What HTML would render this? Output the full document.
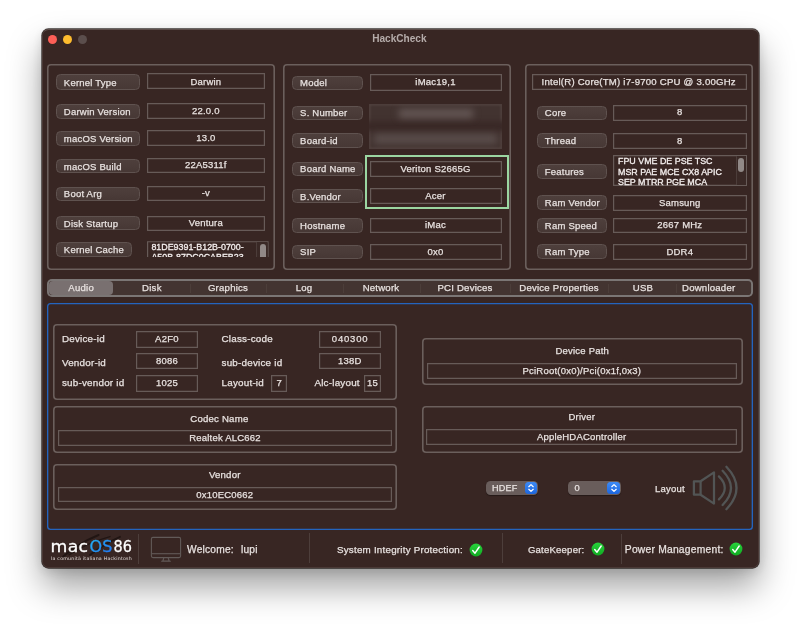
<!DOCTYPE html>
<html><head><meta charset="utf-8"><title>HackCheck</title>
<style>
html,body{margin:0;padding:0;background:#fff;}
body{width:800px;height:624px;position:relative;overflow:hidden;font-family:"Liberation Sans",sans-serif;font-size:9.5px;letter-spacing:0.22px;color:#e8e2e0;-webkit-text-stroke:0.25px #e8e2e0;}
#L{position:absolute;left:0;top:0;width:800px;height:624px;will-change:transform;}
#L>div,#L>svg,.abs,.blue svg,.blur i,.clip span,.clip i{position:absolute;box-sizing:border-box;display:block;}
.win{left:41.5px;top:28.5px;width:717px;height:539.5px;background:#382623;border-radius:6.5px;border:1px solid #4a3936;border-top-color:#5d4e4b;box-shadow:0 0 0 0.7px rgba(18,10,8,.8),0 19px 34px rgba(0,0,0,.37),0 3px 12px rgba(0,0,0,.13);}
.tl{width:9.4px;height:9.4px;border-radius:50%;}
.title{font-weight:bold;letter-spacing:0;color:#b5acaa;-webkit-text-stroke:0;}
.grp{box-shadow:inset 0 0 0 1.6px #6b5f5c;border-radius:4px;}
.lbl{border-radius:4.5px;background:linear-gradient(#4e3f3c,#473835);border:1px solid #5f524f;}
.val{box-shadow:inset 0 0 0 1.2px #675b58;}
.clip{overflow:hidden;}
.ml{font-size:8.9px;line-height:10px;letter-spacing:0;white-space:nowrap;color:#f4efee;-webkit-text-stroke:0.3px #f4efee;}
.trk{border-left:1px solid #4c3d3a;background:#3a2926;}
.thumb{background:#918987;border-radius:3px;}
.t{white-space:nowrap;}
.tabs{box-shadow:inset 0 0 0 1.9px #7b7675;border-radius:5px;background:#433431;}
.sel{background:#797070;border-radius:4px;}
.sep{background:#4d3e3b;}
.sep2{background:#55474480;}
.pop{background:#695d5b;border-radius:4.5px;box-shadow:0 0.5px 1px rgba(0,0,0,.35);}
.blue{background:linear-gradient(#3d8bf6,#1c66df);border-radius:3.5px;}
.blue svg{left:0.15px;top:0}
.blur{background:#423330;filter:blur(0.7px);overflow:hidden}
.blur i{filter:blur(3.5px);}
.blur i.bd{left:0;top:0;right:0;bottom:0;border:1.2px solid #5f514e;filter:blur(0.9px);}
</style></head><body><div id="L">
<div class="win"></div>
<div class="tl" style="left:47.8px;top:34.5px;background:#fe5f57"></div>
<div class="tl" style="left:62.8px;top:34.5px;background:#febc2e"></div>
<div class="tl" style="left:77.8px;top:34.5px;background:#5b4e4c"></div>
<div class="t title" style="left:299.4px;top:33px;height:11px;line-height:11px;font-size:10.1px;width:200.0px;text-align:center;">HackCheck</div>
<div class="grp" style="left:47px;top:64px;width:227.9px;height:205.6px;"></div>
<div class="lbl" style="left:56.0px;top:74.25px;width:84.0px;height:15.25px;"></div>
<div class="t" style="left:63.85px;top:77px;height:11px;line-height:11px;font-size:9.5px;">Kernel Type</div>
<div class="val" style="left:147px;top:73.25px;width:117.75px;height:16.15px;"></div>
<div class="t" style="left:147px;top:76px;height:11px;line-height:11px;font-size:9.5px;width:117.75px;text-align:center;">Darwin</div>
<div class="lbl" style="left:56.0px;top:104px;width:84.0px;height:14.6px;"></div>
<div class="t" style="left:63.85px;top:106px;height:11px;line-height:11px;font-size:9.5px;">Darwin Version</div>
<div class="val" style="left:147px;top:102.6px;width:117.75px;height:16.4px;"></div>
<div class="t" style="left:147px;top:105px;height:11px;line-height:11px;font-size:9.5px;width:117.75px;text-align:center;">22.0.0</div>
<div class="lbl" style="left:56.0px;top:130.8px;width:84.0px;height:14.8px;"></div>
<div class="t" style="left:63.85px;top:133px;height:11px;line-height:11px;font-size:9.5px;">macOS Version</div>
<div class="val" style="left:147px;top:129.5px;width:117.75px;height:16.25px;"></div>
<div class="t" style="left:147px;top:132px;height:11px;line-height:11px;font-size:9.5px;width:117.75px;text-align:center;">13.0</div>
<div class="lbl" style="left:56.0px;top:158.6px;width:84.0px;height:14.6px;"></div>
<div class="t" style="left:63.85px;top:161px;height:11px;line-height:11px;font-size:9.5px;">macOS Build</div>
<div class="val" style="left:147px;top:157.5px;width:117.75px;height:15.5px;"></div>
<div class="t" style="left:147px;top:159px;height:11px;line-height:11px;font-size:9.5px;width:117.75px;text-align:center;">22A5311f</div>
<div class="lbl" style="left:56.0px;top:186.5px;width:84.0px;height:14.5px;"></div>
<div class="t" style="left:63.85px;top:188px;height:11px;line-height:11px;font-size:9.5px;">Boot Arg</div>
<div class="val" style="left:147px;top:185.5px;width:117.75px;height:15.75px;"></div>
<div class="t" style="left:147px;top:187px;height:11px;line-height:11px;font-size:9.5px;width:117.75px;text-align:center;">-v</div>
<div class="lbl" style="left:56.0px;top:216px;width:84.0px;height:14.4px;"></div>
<div class="t" style="left:63.85px;top:218px;height:11px;line-height:11px;font-size:9.5px;">Disk Startup</div>
<div class="val" style="left:147px;top:215.5px;width:117.75px;height:15.25px;"></div>
<div class="t" style="left:147px;top:217px;height:11px;line-height:11px;font-size:9.5px;width:117.75px;text-align:center;">Ventura</div>
<div class="lbl" style="left:56.0px;top:242.25px;width:75.5px;height:14.65px;"></div>
<div class="t" style="left:63.85px;top:244px;height:11px;line-height:11px;font-size:9.5px;">Kernel Cache</div>
<div class="val clip" style="left:147px;top:241.35px;width:121.6px;height:19.75px;clip-path:inset(0 0 4px 0)"><span class="ml" style="left:4.4px;top:0.75px">81DE9391-B12B-0700-</span><span class="ml" style="left:4.4px;top:11.15px">A50B-87DC0CABEB23</span><i class="trk" style="left:109.4px;top:1px;width:11px;height:16px"></i><i class="thumb" style="left:112.5px;top:2.7px;width:6.2px;height:16px"></i></div>
<div class="grp" style="left:283.2px;top:64px;width:227.5px;height:205.6px;"></div>
<div class="lbl" style="left:292.25px;top:75.5px;width:70.25px;height:14.25px;"></div>
<div class="t" style="left:300.1px;top:77px;height:11px;line-height:11px;font-size:9.5px;">Model</div>
<div class="val" style="left:369.5px;top:74px;width:132.0px;height:16.5px;"></div>
<div class="t" style="left:369.5px;top:76px;height:11px;line-height:11px;font-size:9.5px;width:132.0px;text-align:center;">iMac19,1</div>
<div class="lbl" style="left:292.25px;top:105.5px;width:70.25px;height:14.25px;"></div>
<div class="t" style="left:300.1px;top:107px;height:11px;line-height:11px;font-size:9.5px;">S. Number</div>
<div class="lbl" style="left:292.25px;top:133px;width:70.25px;height:14.6px;"></div>
<div class="t" style="left:300.1px;top:135px;height:11px;line-height:11px;font-size:9.5px;">Board-id</div>
<div class="lbl" style="left:292.25px;top:161.5px;width:70.25px;height:14.25px;"></div>
<div class="t" style="left:300.1px;top:163px;height:11px;line-height:11px;font-size:9.5px;">Board Name</div>
<div class="val" style="left:369.5px;top:160.5px;width:132.0px;height:16.0px;"></div>
<div class="t" style="left:369.5px;top:163px;height:11px;line-height:11px;font-size:9.5px;width:132.0px;text-align:center;">Veriton S2665G</div>
<div class="lbl" style="left:292.25px;top:189px;width:70.25px;height:14.25px;"></div>
<div class="t" style="left:300.1px;top:191px;height:11px;line-height:11px;font-size:9.5px;">B.Vendor</div>
<div class="val" style="left:369.5px;top:188px;width:132.0px;height:16px;"></div>
<div class="t" style="left:369.5px;top:190px;height:11px;line-height:11px;font-size:9.5px;width:132.0px;text-align:center;">Acer</div>
<div class="lbl" style="left:292.25px;top:218.25px;width:70.25px;height:14.35px;"></div>
<div class="t" style="left:300.1px;top:220px;height:11px;line-height:11px;font-size:9.5px;">Hostname</div>
<div class="val" style="left:369.5px;top:217.5px;width:132.0px;height:15.5px;"></div>
<div class="t" style="left:369.5px;top:219px;height:11px;line-height:11px;font-size:9.5px;width:132.0px;text-align:center;">iMac</div>
<div class="lbl" style="left:292.25px;top:244.5px;width:70.25px;height:14.5px;"></div>
<div class="t" style="left:300.1px;top:246px;height:11px;line-height:11px;font-size:9.5px;">SIP</div>
<div class="val" style="left:369.5px;top:243.75px;width:132.0px;height:15.75px;"></div>
<div class="t" style="left:369.5px;top:246px;height:11px;line-height:11px;font-size:9.5px;width:132.0px;text-align:center;">0x0</div>
<div class="blur" style="left:369px;top:104px;width:133.4px;height:45px"><i class="bd"></i><i style="left:-4px;top:16.5px;width:142px;height:10px;background:#3a2927;filter:blur(2.5px)"></i><i style="left:30px;top:4.5px;width:74px;height:9.5px;background:#65585600;"></i><i style="left:30px;top:4.5px;width:74px;height:9.5px;background:#635654"></i><i style="left:5px;top:29.5px;width:123px;height:10.5px;background:#594c4a"></i></div>
<div class="" style="left:365px;top:155px;width:144px;height:53.75px;border:2px solid #9bd6a1"></div>
<div class="grp" style="left:525.4px;top:64px;width:227.6px;height:205.8px;"></div>
<div class="val" style="left:531.5px;top:74px;width:215.1px;height:15.75px;"></div>
<div class="t" style="left:531.2px;top:76px;height:11px;line-height:11px;font-size:9.6px;width:215.1px;text-align:center;">Intel(R) Core(TM) i7-9700 CPU @ 3.00GHz</div>
<div class="lbl" style="left:537.0px;top:105.5px;width:69.6px;height:14.6px;"></div>
<div class="t" style="left:544.85px;top:107px;height:11px;line-height:11px;font-size:9.5px;">Core</div>
<div class="val" style="left:613px;top:104.5px;width:133.6px;height:16.0px;"></div>
<div class="t" style="left:613px;top:106px;height:11px;line-height:11px;font-size:9.5px;width:133.6px;text-align:center;">8</div>
<div class="lbl" style="left:537.0px;top:133px;width:69.6px;height:14.6px;"></div>
<div class="t" style="left:544.85px;top:135px;height:11px;line-height:11px;font-size:9.5px;">Thread</div>
<div class="val" style="left:613px;top:133px;width:133.6px;height:16px;"></div>
<div class="t" style="left:613px;top:135px;height:11px;line-height:11px;font-size:9.5px;width:133.6px;text-align:center;">8</div>
<div class="lbl" style="left:537.0px;top:164px;width:69.6px;height:14.75px;"></div>
<div class="t" style="left:544.85px;top:166px;height:11px;line-height:11px;font-size:9.5px;">Features</div>
<div class="lbl" style="left:537.0px;top:195.25px;width:69.6px;height:15.0px;"></div>
<div class="t" style="left:544.85px;top:197px;height:11px;line-height:11px;font-size:9.5px;">Ram Vendor</div>
<div class="val" style="left:613px;top:195px;width:133.6px;height:15.5px;"></div>
<div class="t" style="left:613px;top:197px;height:11px;line-height:11px;font-size:9.5px;width:133.6px;text-align:center;">Samsung</div>
<div class="lbl" style="left:537.0px;top:218.1px;width:69.6px;height:14.8px;"></div>
<div class="t" style="left:544.85px;top:220px;height:11px;line-height:11px;font-size:9.5px;">Ram Speed</div>
<div class="val" style="left:613px;top:217.5px;width:133.6px;height:15.5px;"></div>
<div class="t" style="left:613px;top:219px;height:11px;line-height:11px;font-size:9.5px;width:133.6px;text-align:center;">2667 MHz</div>
<div class="lbl" style="left:537.0px;top:244.4px;width:69.6px;height:14.6px;"></div>
<div class="t" style="left:544.85px;top:246px;height:11px;line-height:11px;font-size:9.5px;">Ram Type</div>
<div class="val" style="left:613px;top:244px;width:133.6px;height:15.5px;"></div>
<div class="t" style="left:613px;top:246px;height:11px;line-height:11px;font-size:9.5px;width:133.6px;text-align:center;">DDR4</div>
<div class="val clip" style="left:613px;top:155.25px;width:133.6px;height:31.15px;"><span class="ml" style="left:5px;top:1px">FPU VME DE PSE TSC</span><span class="ml" style="left:5px;top:11.5px">MSR PAE MCE CX8 APIC</span><span class="ml" style="left:5px;top:21.85px">SEP MTRR PGE MCA</span><i class="trk" style="left:122.6px;top:1px;width:10px;height:29px"></i><i class="thumb" style="left:125.1px;top:3.2px;width:5.8px;height:13.5px"></i></div>
<div class="tabs" style="left:46.9px;top:279px;width:706.1px;height:18.4px;"></div>
<div class="sel" style="left:48.6px;top:280.9px;width:64.5px;height:14.6px;"></div>
<div class="t" style="left:21.2px;top:282px;height:11px;line-height:11px;font-size:9.6px;width:120.0px;text-align:center;">Audio</div>
<div class="t" style="left:91.9px;top:282px;height:11px;line-height:11px;font-size:9.6px;width:120.0px;text-align:center;">Disk</div>
<div class="t" style="left:168px;top:282px;height:11px;line-height:11px;font-size:9.6px;width:120px;text-align:center;">Graphics</div>
<div class="t" style="left:244px;top:282px;height:11px;line-height:11px;font-size:9.6px;width:120px;text-align:center;">Log</div>
<div class="t" style="left:321px;top:282px;height:11px;line-height:11px;font-size:9.6px;width:120px;text-align:center;">Network</div>
<div class="t" style="left:405px;top:282px;height:11px;line-height:11px;font-size:9.6px;width:120px;text-align:center;">PCI Devices</div>
<div class="t" style="left:499px;top:282px;height:11px;line-height:11px;font-size:9.6px;width:120px;text-align:center;">Device Properties</div>
<div class="t" style="left:583px;top:282px;height:11px;line-height:11px;font-size:9.6px;width:120px;text-align:center;">USB</div>
<div class="t" style="left:648.7px;top:282px;height:11px;line-height:11px;font-size:9.6px;width:120.0px;text-align:center;">Downloader</div>
<div class="sep2" style="left:189.5px;top:284px;width:1.0px;height:9px;"></div>
<div class="sep2" style="left:265.75px;top:284px;width:1.0px;height:9px;"></div>
<div class="sep2" style="left:342.75px;top:284px;width:1.0px;height:9px;"></div>
<div class="sep2" style="left:419.5px;top:284px;width:1.0px;height:9px;"></div>
<div class="sep2" style="left:510.0px;top:284px;width:1.0px;height:9px;"></div>
<div class="sep2" style="left:608.25px;top:284px;width:1.0px;height:9px;"></div>
<div class="sep2" style="left:676.0px;top:284px;width:1.0px;height:9px;"></div>
<div class="" style="left:47.1px;top:303px;width:705.9px;height:227.1px;box-shadow:inset 0 0 0 1.35px #2464be;border-radius:3.5px"></div>
<div class="grp" style="left:53px;top:323.5px;width:343.75px;height:76.25px;"></div>
<div class="t" style="left:61.9px;top:333px;height:11px;line-height:11px;font-size:9.85px;">Device-id</div>
<div class="val" style="left:135.9px;top:331.4px;width:62.0px;height:16.35px;"></div>
<div class="t" style="left:135.9px;top:333px;height:11px;line-height:11px;font-size:9.5px;width:62.0px;text-align:center;">A2F0</div>
<div class="t" style="left:61.9px;top:357px;height:11px;line-height:11px;font-size:9.85px;">Vendor-id</div>
<div class="val" style="left:135.9px;top:353.4px;width:62.0px;height:16.1px;"></div>
<div class="t" style="left:135.9px;top:355px;height:11px;line-height:11px;font-size:9.5px;width:62.0px;text-align:center;">8086</div>
<div class="t" style="left:61.9px;top:377px;height:11px;line-height:11px;font-size:9.85px;">sub-vendor id</div>
<div class="val" style="left:135.9px;top:375.4px;width:62.0px;height:16.2px;"></div>
<div class="t" style="left:135.9px;top:377px;height:11px;line-height:11px;font-size:9.5px;width:62.0px;text-align:center;">1025</div>
<div class="t" style="left:221.5px;top:333px;height:11px;line-height:11px;font-size:9.85px;">Class-code</div>
<div class="val" style="left:318.5px;top:331.4px;width:62.4px;height:16.35px;"></div>
<div class="t" style="left:318.5px;top:333px;height:11px;line-height:11px;font-size:9.5px;width:62.4px;text-align:center;"><span style="letter-spacing:0.8px;margin-right:-0.8px">040300</span></div>
<div class="t" style="left:221.5px;top:357px;height:11px;line-height:11px;font-size:9.85px;">sub-device id</div>
<div class="val" style="left:318.5px;top:353.4px;width:62.4px;height:16.1px;"></div>
<div class="t" style="left:318.5px;top:355px;height:11px;line-height:11px;font-size:9.5px;width:62.4px;text-align:center;">138D</div>
<div class="t" style="left:221.5px;top:377px;height:11px;line-height:11px;font-size:9.85px;">Layout-id</div>
<div class="val" style="left:270.9px;top:375.4px;width:16.2px;height:16.2px;"></div>
<div class="t" style="left:271.2px;top:377px;height:11px;line-height:11px;font-size:9.5px;width:16.2px;text-align:center;">7</div>
<div class="t" style="left:314.4px;top:377px;height:11px;line-height:11px;font-size:9.85px;">Alc-layout</div>
<div class="val" style="left:363.75px;top:375.4px;width:17.15px;height:16.2px;"></div>
<div class="t" style="left:364.05px;top:377px;height:11px;line-height:11px;font-size:9.5px;width:17.15px;text-align:center;">15</div>
<div class="grp" style="left:53px;top:406.25px;width:343.75px;height:46.25px;"></div>
<div class="t" style="left:190.25px;top:413px;height:11px;line-height:11px;font-size:9.6px;">Codec Name</div>
<div class="val" style="left:58px;top:429.5px;width:334px;height:16.1px;"></div>
<div class="t" style="left:58px;top:432px;height:11px;line-height:11px;font-size:9.5px;width:334px;text-align:center;">Realtek ALC662</div>
<div class="grp" style="left:53px;top:464.25px;width:343.75px;height:46.0px;"></div>
<div class="t" style="left:53px;top:469px;height:11px;line-height:11px;font-size:9.6px;width:343.5px;text-align:center;">Vendor</div>
<div class="val" style="left:58px;top:486.9px;width:333.5px;height:15.6px;"></div>
<div class="t" style="left:58px;top:489px;height:11px;line-height:11px;font-size:9.5px;width:333.5px;text-align:center;">0x10EC0662</div>
<div class="grp" style="left:421.5px;top:338px;width:321.25px;height:46.5px;"></div>
<div class="t" style="left:421.5px;top:345px;height:11px;line-height:11px;font-size:9.5px;width:321.5px;text-align:center;">Device Path</div>
<div class="val" style="left:426.75px;top:363px;width:310.25px;height:15.75px;"></div>
<div class="t" style="left:426.75px;top:365px;height:11px;line-height:11px;font-size:9.5px;width:310.25px;text-align:center;">PciRoot(0x0)/Pci(0x1f,0x3)</div>
<div class="grp" style="left:421.5px;top:406.25px;width:321.25px;height:46.25px;"></div>
<div class="t" style="left:421.5px;top:411px;height:11px;line-height:11px;font-size:9.5px;width:320.5px;text-align:center;">Driver</div>
<div class="val" style="left:426.25px;top:429.4px;width:310.75px;height:15.2px;"></div>
<div class="t" style="left:426.25px;top:431px;height:11px;line-height:11px;font-size:9.5px;width:310.75px;text-align:center;">AppleHDAController</div>
<div class="pop" style="left:486px;top:480.6px;width:52px;height:14.6px;"></div>
<div class="t" style="left:492px;top:483px;height:10px;line-height:10px;font-size:9.1px;">HDEF</div>
<div class="blue" style="left:525px;top:481.7px;width:12.3px;height:12.0px;"><svg width="12" height="12" viewBox="0 0 12 12"><path d="M3.8 4.7 L6 2.6 L8.2 4.7 M3.8 7.3 L6 9.4 L8.2 7.3" fill="none" stroke="#fff" stroke-width="1.25" stroke-linecap="round" stroke-linejoin="round"/></svg></div>
<div class="pop" style="left:568px;top:480.6px;width:53px;height:14.6px;"></div>
<div class="t" style="left:574.4px;top:483px;height:10px;line-height:10px;font-size:9.3px;">0</div>
<div class="blue" style="left:607.4px;top:481.7px;width:12.3px;height:12.0px;"><svg width="12" height="12" viewBox="0 0 12 12"><path d="M3.8 4.7 L6 2.6 L8.2 4.7 M3.8 7.3 L6 9.4 L8.2 7.3" fill="none" stroke="#fff" stroke-width="1.25" stroke-linecap="round" stroke-linejoin="round"/></svg></div>
<div class="t" style="left:655px;top:483px;height:11px;line-height:11px;font-size:9.5px;">Layout</div>
<svg class="abs" style="left:690px;top:462px" width="52" height="52" viewBox="690 462 52 52" fill="none" stroke="#525555" stroke-width="2.25" stroke-linejoin="round" stroke-linecap="round">
<path d="M693.9 481.3 H700.6 L714 472.4 V503.6 L700.6 494.7 H693.9 Z"/><path d="M700.6 481.5 V494.5"/>
<path d="M718.9 476.4 Q730.6 488 718.9 499.4"/><path d="M722.6 470.8 Q739.4 488 722.6 505"/><path d="M726.4 466.7 Q746.6 488 726.4 509.2"/></svg>
<div class="sep" style="left:137.75px;top:534px;width:1.0px;height:30px;"></div>
<div class="sep" style="left:308.75px;top:532.5px;width:1.0px;height:30.5px;"></div>
<div class="sep" style="left:502.0px;top:533px;width:1.0px;height:30px;"></div>
<div class="sep" style="left:620.75px;top:533.75px;width:1.0px;height:30.0px;"></div>
<svg class="abs" style="left:46px;top:532px" width="92" height="34" viewBox="46 532 92 34">
<g fill="none" stroke="#1c1210" stroke-linecap="round" opacity=".8"><path d="M63.2 556.6 Q78 543.5 98.6 535" stroke-width="2"/><path d="M69 554.8 Q88 542.5 110 536.6" stroke-width="1.5"/><path d="M90 555 Q104 544 120 536.8" stroke-width="1.9"/></g>
<defs><linearGradient id="lg" x1="0" y1="0" x2="1" y2="1"><stop offset="0" stop-color="#25bbfb"/><stop offset="1" stop-color="#1f6cee"/></linearGradient></defs>
<g font-family="DejaVu Sans, Liberation Sans, sans-serif" font-size="15.8" fill="#fff" stroke="#fff" stroke-width=".3"><text x="50.6" y="552" textLength="37.6" lengthAdjust="spacingAndGlyphs">mac</text><text x="89.4" y="552" fill="url(#lg)" stroke="url(#lg)" textLength="23.2" lengthAdjust="spacingAndGlyphs">OS</text><text x="113.4" y="552" textLength="18.8" lengthAdjust="spacingAndGlyphs">86</text></g>
<text x="51" y="559.6" font-family="DejaVu Sans, Liberation Sans, sans-serif" font-size="4.7" fill="#e4dedc" textLength="81" lengthAdjust="spacingAndGlyphs">la comunità italiana Hackintosh</text>
</svg>
<svg class="abs" style="left:149px;top:535px" width="34" height="29" viewBox="0 0 34 29" fill="none" stroke="#625a58" stroke-width="1.1" stroke-linejoin="round">
<rect x="2.4" y="2.4" width="29.2" height="20.2" rx="1.6"/><path d="M2.6 18.7 H31.4"/><path d="M14.8 22.8 L13.8 26 H20.2 L19.2 22.8 M12.2 26.2 H21.8"/></svg>
<div class="t" style="left:187px;top:544px;height:11px;line-height:11px;font-size:10.2px;">Welcome:</div>
<div class="t" style="left:241px;top:544px;height:11px;line-height:11px;font-size:10.2px;">lupi</div>
<div class="t" style="left:337px;top:544px;height:11px;line-height:11px;font-size:9.8px;">System Integrity Protection:</div>
<div class="t" style="left:527.9px;top:544px;height:11px;line-height:11px;font-size:9.55px;">GateKeeper:</div>
<div class="t" style="left:624.8px;top:544px;height:11px;line-height:11px;font-size:10.3px;">Power Management:</div>
<svg class="abs" style="left:469px;top:542.5px" width="14" height="14" viewBox="0 0 14 14"><defs><linearGradient id="g0" x1="0" y1="0" x2="0" y2="1"><stop offset="0" stop-color="#27d23b"/><stop offset="1" stop-color="#10ab22"/></linearGradient></defs><circle cx="7" cy="7" r="6.4" fill="url(#g0)"/><path d="M3.7 7.6 L6 10.2 L10.2 4" fill="none" stroke="#fff" stroke-width="1.45" stroke-linecap="round" stroke-linejoin="round"/></svg>
<svg class="abs" style="left:590.5px;top:542.25px" width="14" height="14" viewBox="0 0 14 14"><defs><linearGradient id="g1" x1="0" y1="0" x2="0" y2="1"><stop offset="0" stop-color="#27d23b"/><stop offset="1" stop-color="#10ab22"/></linearGradient></defs><circle cx="7" cy="7" r="6.4" fill="url(#g1)"/><path d="M3.7 7.6 L6 10.2 L10.2 4" fill="none" stroke="#fff" stroke-width="1.45" stroke-linecap="round" stroke-linejoin="round"/></svg>
<svg class="abs" style="left:729.25px;top:541.9px" width="14" height="14" viewBox="0 0 14 14"><defs><linearGradient id="g2" x1="0" y1="0" x2="0" y2="1"><stop offset="0" stop-color="#27d23b"/><stop offset="1" stop-color="#10ab22"/></linearGradient></defs><circle cx="7" cy="7" r="6.4" fill="url(#g2)"/><path d="M3.7 7.6 L6 10.2 L10.2 4" fill="none" stroke="#fff" stroke-width="1.45" stroke-linecap="round" stroke-linejoin="round"/></svg>
</div></body></html>
